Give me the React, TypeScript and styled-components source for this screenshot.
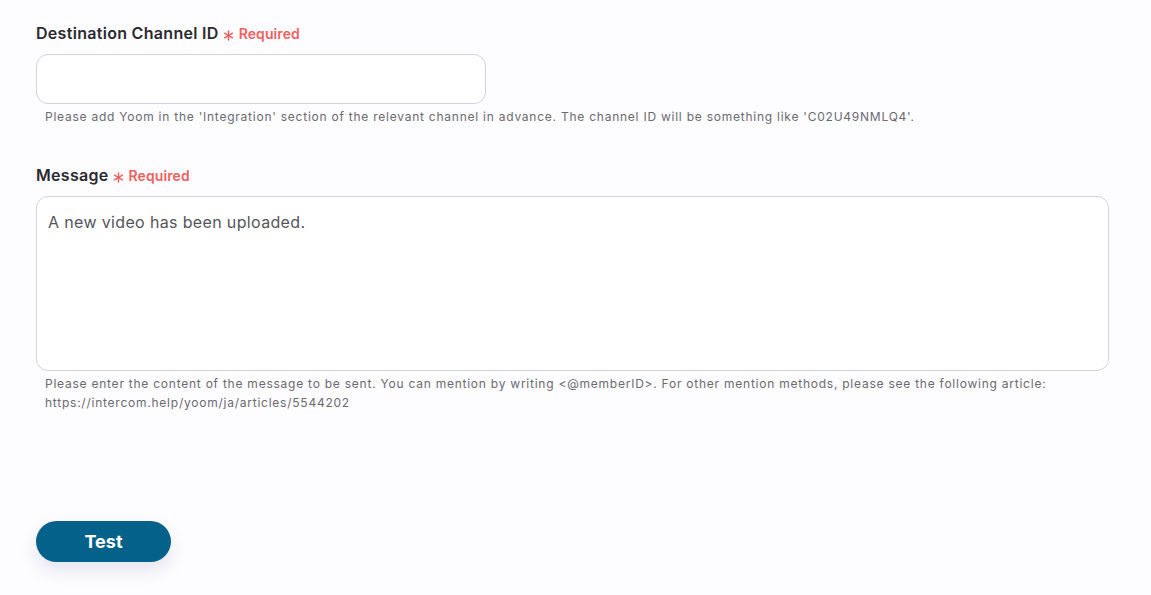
import styled, { createGlobalStyle } from "styled-components";

const GlobalStyle = createGlobalStyle`
    html, body {
        margin: 0;
        padding: 0;
        background: #fdfcfe;
        font-family: Inter, "Noto Sans", sans-serif;
    }
`;

const Page = styled.div`
    width: 1151px;
    height: 595px;
    box-sizing: border-box;
    padding: 23px 36px 0 36px;
    display: flex;
    flex-direction: column;
`;

const Field = styled.div<{ $gap?: number }>`
    display: flex;
    flex-direction: column;
    margin-bottom: ${(p) => p.$gap ?? 0}px;
`;

const LabelRow = styled.div`
    display: flex;
    align-items: center;
    height: 20px;
    margin-bottom: 11px;
`;

const Label = styled.span`
    font-size: 16px;
    font-weight: 600;
    letter-spacing: 0.3px;
    color: #2a2a30;
`;

const Star = styled.svg`
    width: 11px;
    height: 11px;
    margin: 5px 5px 0 4px;
`;

const Required = styled.span`
    color: #f2605d;
    font-size: 14px;
    font-weight: 600;
    letter-spacing: 0.1px;
`;

const Input = styled.input`
    box-sizing: border-box;
    width: 450px;
    height: 50px;
    border: 1px solid #d3d1df;
    border-radius: 12px;
    background: #fff;
    outline: none;
    padding: 0 12px;
    font-family: inherit;
    font-size: 15px;
`;

const TextArea = styled.textarea`
    box-sizing: border-box;
    width: 1073px;
    height: 175px;
    border: 1px solid #d3d1df;
    border-radius: 12px;
    background: #fff;
    outline: none;
    resize: none;
    padding: 15px 11px;
    font-family: inherit;
    font-size: 16px;
    line-height: 20px;
    letter-spacing: 0.35px;
    color: #55555c;
`;

const Help = styled.p`
    margin: 3px 0 0 9px;
    font-size: 12px;
    line-height: 19px;
    letter-spacing: 0.76px;
    color: #6b6a72;
`;

const TestButton = styled.button`
    width: 135px;
    height: 41px;
    border: none;
    border-radius: 21px;
    background: #03618a;
    color: #fff;
    font-family: inherit;
    font-size: 18px;
    font-weight: 700;
    cursor: pointer;
    box-shadow: 0 8px 18px rgba(40, 50, 120, 0.12);
`;

function RequiredMark() {
    return (
        <>
            <Star viewBox="0 0 12 12">
                <g stroke="#f2605d" strokeWidth="1.6" strokeLinecap="round">
                    <line x1="6" y1="1" x2="6" y2="11" />
                    <line x1="1.7" y1="3.5" x2="10.3" y2="8.5" />
                    <line x1="1.7" y1="8.5" x2="10.3" y2="3.5" />
                </g>
            </Star>
            <Required>Required</Required>
        </>
    );
}

export default function App() {
    return (
        <Page>
            <GlobalStyle />
            <Field $gap={39}>
                <LabelRow>
                    <Label>Destination Channel ID</Label>
                    <RequiredMark />
                </LabelRow>
                <Input />
                <Help>
                    Please add Yoom in the 'Integration' section of the relevant channel in advance. The channel ID will be something like 'C02U49NMLQ4'.
                </Help>
            </Field>
            <Field $gap={109}>
                <LabelRow>
                    <Label>Message</Label>
                    <RequiredMark />
                </LabelRow>
                <TextArea defaultValue="A new video has been uploaded." />
                <Help>
                    Please enter the content of the message to be sent. You can mention by writing &lt;@memberID&gt;. For other mention methods, please see the following article:
                    <br />
                    https://intercom.help/yoom/ja/articles/5544202
                </Help>
            </Field>
            <div>
                <TestButton>Test</TestButton>
            </div>
        </Page>
    );
}
